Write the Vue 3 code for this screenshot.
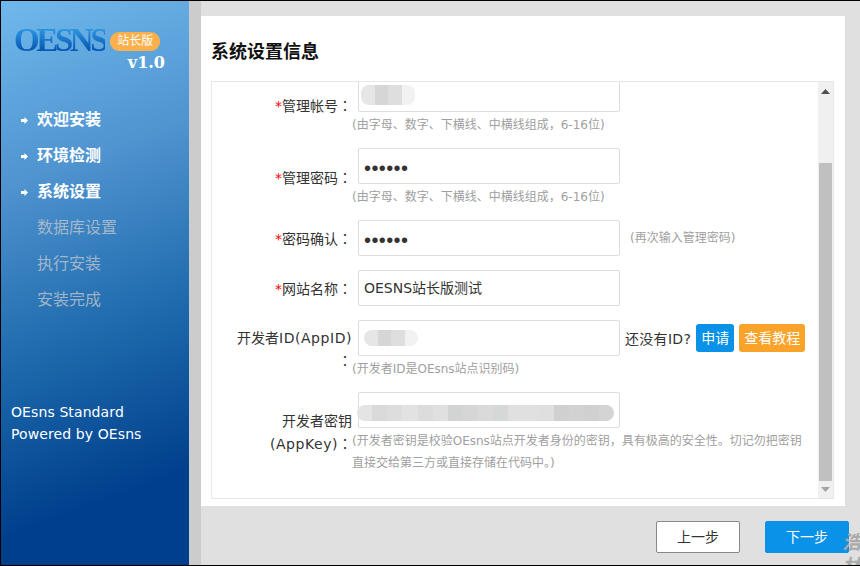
<script setup>
const steps = [
  { name: '欢迎安装', done: true },
  { name: '环境检测', done: true },
  { name: '系统设置', done: true },
  { name: '数据库设置', done: false },
  { name: '执行安装', done: false },
  { name: '安装完成', done: false }
]
const hint = '(由字母、数字、下横线、中横线组成，6-16位)'
const shadeA = ['#e6e6e6', '#d6d6d8', '#dedede', '#f2f2f2']
const shadeB = ['#e4e4e4', '#d8dadb', '#dedddc', '#e2e2e2', '#dcdcdc', '#e0e0e0', '#d2d3d3', '#d6d6d6', '#dadada', '#d4d8d9', '#e2e0de', '#e0e0e0', '#dedfe0', '#d0d0d0', '#d2d2d2', '#d0d0d0', '#d4d4d4']
</script>

<template>
  <div class="frame">
    <aside class="side">
      <div class="brand">
        <div class="brand-top">
          <span class="logo">OESNS</span>
          <span class="edition">站长版</span>
        </div>
        <div class="version">v1.0</div>
      </div>
      <ul class="steps">
        <li v-for="s in steps" :key="s.name" class="step" :class="{ done: s.done }">
          <svg v-if="s.done" class="arrow" width="7" height="7" viewBox="0 0 7 7"><path d="M0 2h3.5V0L7 3.5 3.5 7V5H0z" fill="#fff" /></svg>
          <span>{{ s.name }}</span>
        </li>
      </ul>
      <div class="credit">
        <div>OEsns Standard</div>
        <div>Powered by OEsns</div>
      </div>
    </aside>
    <div class="strip"></div>
    <main class="main">
      <section class="panel">
        <h1 class="title">系统设置信息</h1>
        <div class="box">
          <div class="scroll">
            <div class="form">
              <div class="row">
                <label class="label"><i>*</i>管理帐号<span class="colon">：</span></label>
                <div class="field">
                  <div class="input"><span class="blur first"><b v-for="c in shadeA" :key="c" :style="{ background: c }"></b></span></div>
                  <p class="hint">{{ hint }}</p>
                </div>
              </div>
              <div class="row">
                <label class="label"><i>*</i>管理密码<span class="colon">：</span></label>
                <div class="field">
                  <div class="input dots">••••••</div>
                  <p class="hint">{{ hint }}</p>
                </div>
              </div>
              <div class="row">
                <label class="label"><i>*</i>密码确认<span class="colon">：</span></label>
                <div class="field inline">
                  <div class="input dots">••••••</div>
                  <span class="hint side-hint">(再次输入管理密码)</span>
                </div>
              </div>
              <div class="row">
                <label class="label"><i>*</i>网站名称<span class="colon">：</span></label>
                <div class="field"><div class="input">OESNS站长版测试</div></div>
              </div>
              <div class="row">
                <label class="label">开发者<span class="latin">ID(AppID)</span><wbr><span class="colon">：</span></label>
                <div class="field">
                  <div class="inline">
                    <div class="input"><span class="blur"><b v-for="c in shadeA" :key="c" :style="{ background: c }"></b></span></div>
                    <span class="ask">还没有ID?</span>
                    <a class="btn blue">申请</a>
                    <a class="btn orange">查看教程</a>
                  </div>
                  <p class="hint">(开发者ID是OEsns站点识别码)</p>
                </div>
              </div>
              <div class="row">
                <label class="label">开发者密钥<span class="latin">(AppKey)</span><span class="colon">：</span></label>
                <div class="field">
                  <div class="input"><span class="blur wide"><b v-for="(c, i) in shadeB" :key="i" :style="{ background: c }"></b></span></div>
                  <p class="hint long">(开发者密钥是校验OEsns站点开发者身份的密钥，具有极高的安全性。切记勿把密钥直接交给第三方或直接存储在代码中。)</p>
                </div>
              </div>
            </div>
          </div>
          <div class="bar">
            <svg class="tri" width="9" height="5" viewBox="0 0 9 5"><path d="M4.5 0L9 5H0z" fill="#505050" /></svg>
            <div class="thumb"></div>
            <svg class="tri low" width="9" height="5" viewBox="0 0 9 5"><path d="M0 0h9L4.5 5z" fill="#a3a3a3" /></svg>
          </div>
        </div>
      </section>
      <footer class="foot">
        <a class="nav prev">上一步</a>
        <a class="nav next">下一步</a>
        <span class="mark">浩<br>林</span>
      </footer>
    </main>
  </div>
</template>

<style>
html, body { margin: 0; height: 100%; overflow: hidden; }
</style>

<style scoped>
.frame {
  box-sizing: border-box;
  width: 860px;
  height: 566px;
  display: flex;
  border: solid #000;
  border-width: 1px 0 1px 1px;
  background: #e0e0e0;
  font-family: "DejaVu Sans", "Noto Sans CJK SC", sans-serif;
  font-size: 14px;
  color: #333;
  overflow: hidden;
}
.side {
  width: 188px;
  flex: none;
  display: flex;
  flex-direction: column;
  background: linear-gradient(160deg, #6fb8ec 0%, #4f93cf 30%, #1e6aad 58%, #003f8c 85%);
}
.brand { padding: 25px 0 0 13px; height: 76px; }
.brand-top { display: flex; align-items: center; height: 28px; }
.logo {
  font-family: "Liberation Serif", serif;
  font-weight: 700;
  font-size: 33px;
  line-height: 28px;
  letter-spacing: -3.4px;
  background: linear-gradient(180deg, #2a93df 15%, #0858b4 85%);
  -webkit-background-clip: text;
  background-clip: text;
  color: transparent;
}
.edition {
  width: 50px;
  height: 19px;
  line-height: 19px;
  margin-left: 5px;
  margin-top: 3px;
  border-radius: 9px;
  background: #fbb04c;
  color: #fff;
  text-align: center;
  font-size: 12px;
}
.version {
  text-align: right;
  padding-right: 24px;
  font-family: "DejaVu Serif", serif;
  font-weight: 700;
  font-size: 16px;
  line-height: 17px;
  color: #fff;
}
.steps { list-style: none; margin: 0; padding: 0 0 0 20px; }
.step {
  height: 36px;
  line-height: 36px;
  font-size: 16px;
  color: rgba(205, 205, 205, 0.72);
  padding-left: 16px;
  position: relative;
}
.step.done { color: #fff; font-weight: 700; }
.arrow { position: absolute; left: 0; top: 15px; }
.credit {
  margin-top: 83px;
  padding-left: 10px;
  font-size: 14px;
  letter-spacing: 0.1px;
  line-height: 22px;
  color: #fff;
}
.strip {
  width: 12px;
  flex: none;
  background: #ccc;
}
.main { flex: 1; min-width: 0; display: flex; flex-direction: column; padding-top: 15px; }
.panel {
  box-sizing: border-box;
  width: 644px;
  height: 490px;
  background: #fff;
  padding: 0 11px 7px 10px;
  display: flex;
  flex-direction: column;
}
.title {
  margin: 0;
  height: 65px;
  line-height: 72px;
  font-size: 18px;
  font-weight: 700;
  color: #111;
}
.box {
  flex: 1;
  min-height: 0;
  display: flex;
  border: 1px solid #e8e8e8;
}
.scroll { flex: 1; min-width: 0; overflow: hidden; }
.form {
  margin-top: -6px;
  display: flex;
  flex-direction: column;
  gap: 14px;
}
.row { display: flex; align-items: center; }
.label {
  width: 146px;
  flex: none;
  box-sizing: border-box;
  padding: 0 6px 0 20px;
  text-align: right;
  line-height: 22px;
  color: #333;
}
.label i { color: #f00; font-style: normal; }
.latin { letter-spacing: 0.55px; }
.colon { font-family: "Noto Sans CJK TC", sans-serif; }
.field { flex: 1; min-width: 0; }
.inline { display: flex; align-items: center; }
.input {
  box-sizing: border-box;
  width: 262px;
  height: 36px;
  padding: 0 5px;
  flex: none;
  border: 1px solid #ddd;
  border-radius: 2px;
  line-height: 34px;
  color: #333;
  display: flex;
  align-items: center;
  position: relative;
  white-space: nowrap;
}
.dots { font-family: "Liberation Sans", sans-serif; font-size: 20px; letter-spacing: 0.4px; padding-top: 3px; color: #333; }
.blur { display: flex; height: 16px; width: 54px; border-radius: 8px; overflow: hidden; filter: blur(0.6px); }
.blur.first { height: 20px; margin-left: -3px; margin-top: 2px; }
.blur b { flex: 1; }
.blur.wide { position: absolute; left: -2px; top: 12px; width: 257px; }
.hint {
  margin: 0 0 -2px -6px;
  padding-top: 2px;
  width: 460px;
  font-size: 12px;
  line-height: 22px;
  color: #a0a0a0;
}
.hint.long { width: 456px; }
.side-hint { margin: 0 0 0 10px; padding: 0; width: auto; }
.ask { margin-left: 5px; letter-spacing: 0.3px; white-space: nowrap; }
.btn {
  height: 28px;
  line-height: 28px;
  padding: 0 5px;
  margin-left: 5px;
  border-radius: 3px;
  color: #fff;
  font-size: 14px;
  white-space: nowrap;
}
.blue { background: #0a91e8; }
.orange { background: #f9a32b; }
.bar {
  width: 15px;
  flex: none;
  background: #f0f0f0;
  display: flex;
  flex-direction: column;
  align-items: center;
}
.tri { flex: none; margin: 7px 0; }
.tri.low { margin: 6px 0; }
.thumb { flex: 1; width: 13px; margin-top: 62px; background: #c0c0c0; }
.foot {
  flex: 1;
  position: relative;
  display: flex;
  align-items: flex-start;
  justify-content: flex-end;
  gap: 25px;
  padding: 15px 11px 0 0;
}
.nav {
  box-sizing: border-box;
  width: 84px;
  height: 32px;
  line-height: 30px;
  text-align: center;
  border-radius: 2px;
  font-size: 14px;
  border: 1px solid #888;
  background: #fff;
  color: #333;
}
.nav.next { background: #0a91e8; border-color: #0a91e8; color: #fff; }
.mark {
  position: absolute;
  left: 641px;
  top: 24px;
  font-size: 19px;
  line-height: 24px;
  font-weight: 700;
  font-style: italic;
  color: #aaa;
}
</style>
